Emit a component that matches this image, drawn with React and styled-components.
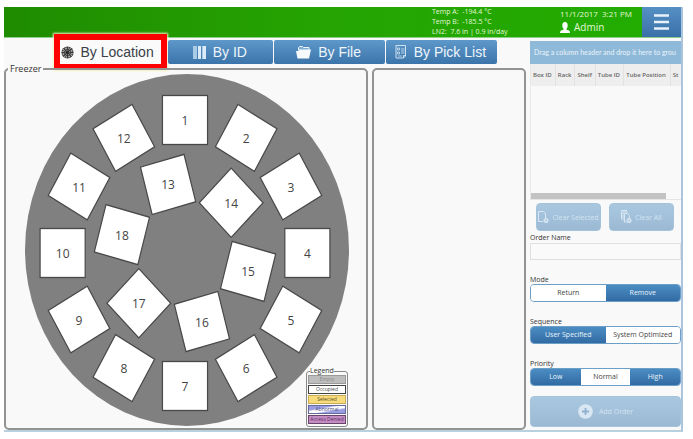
import React, { useState } from "react";
import styled, { createGlobalStyle } from "styled-components";

const GlobalStyle = createGlobalStyle`
* {
  box-sizing: border-box;
}

body {
  margin: 0;
  background: #fff;
  color: #333;
  font-family: "Open Sans", "Noto Sans", sans-serif;
  font-size: 8px;
}

button, input {
  font-family: inherit;
  margin: 0;
}
`;

const Page = styled.div`
  padding: 7px 10px 6px 4px;
`;

const Screen = styled.div`
  background: #f9f9f9;
  border-right: 2px solid #a9c4dc;
  border-bottom: 2px solid #b9d0de;
`;

const Header = styled.header`
  display: flex;
  justify-content: flex-end;
  height: 31px;
  background: linear-gradient(90deg, #1f8b00, #25a302 45%, #22ad00);
  border-bottom: 1px solid #8fcf8a;
  color: #e2f7d8;
`;

const Readings = styled.div`
  width: 128px;
  font-size: 7px;
  line-height: 10px;
  white-space: pre;
`;

const Session = styled.div`
  width: 82px;
  line-height: 13px;
  white-space: pre;
`;

const User = styled.div`
  display: flex;
  align-items: center;
  gap: 4px;
  font-size: 10px;
  line-height: 15px;
`;

const MenuButton = styled.button`
  display: flex;
  align-items: center;
  justify-content: center;
  width: 39px;
  padding: 0;
  border: 0;
  background: linear-gradient(#5590c4, #3a70a8);
`;

const Body = styled.main`
  display: grid;
  grid-template-columns: minmax(0, 1fr) 151px;
  gap: 4px;
  padding-top: 2px;
`;

const Tabs = styled.nav`
  display: grid;
  grid-template-columns: 112fr 105fr 110fr 111fr;
  gap: 1px;
  margin: 0 29px 0 51px;
`;

const Tab = styled.button`
  position: relative;
  display: flex;
  align-items: center;
  justify-content: center;
  gap: 7px;
  height: 24px;
  padding: 0 ${(props) => (props.$active ? "8px" : "2px")} 0 0;
  border: 0;
  border-radius: 2px;
  background: ${(props) => (props.$active ? "#fafafa" : "linear-gradient(#5e98ca, #3b74aa)")};
  color: ${(props) => (props.$active ? "#3a3f48" : "#eef5fb")};
  font-family: "Liberation Sans", Arial, sans-serif;
  font-size: 14px;
  white-space: nowrap;
`;

const Highlight = styled.span`
  position: absolute;
  inset: -6px 0 -6px -1px;
  border: 6px solid #f00;
  box-shadow: 0 0 2px 1px #f3f3c4;
  pointer-events: none;
`;

const Panels = styled.div`
  display: grid;
  grid-template-columns: minmax(0, 364fr) minmax(0, 154fr);
  gap: 4px;
`;

const Freezer = styled.fieldset`
  position: relative;
  min-width: 0;
  margin: 0;
  padding: 0;
  border: 2px solid #939393;
  border-radius: 5px;
`;

const FreezerTitle = styled.legend`
  margin-left: 2px;
  padding: 0 2px;
  font-size: 9px;
  line-height: 10px;
`;

const Diagram = styled.svg`
  display: block;
  width: 100%;
  margin-top: -4px;
  font-size: 12px;
`;

const Detail = styled.section`
  margin-top: 4px;
  border: 2px solid #939393;
  border-radius: 5px;
`;

const Legend = styled.fieldset`
  position: absolute;
  right: 18px;
  bottom: 1px;
  width: 42px;
  min-width: 0;
  margin: 0;
  padding: 0 1px 1px;
  border: 1px solid #888;
  border-radius: 3px;
  background: #f9f9f9;
`;

const LegendTitle = styled.legend`
  margin-left: 2px;
  padding: 0;
  background: #f9f9f9;
  font-size: 7px;
  line-height: 8px;
`;

const LegendItem = styled.div`
  height: 9px;
  margin-bottom: 1px;
  overflow: hidden;
  border: 1px solid ${(props) => props.$line};
  background: ${(props) => props.$fill};
  color: ${(props) => props.$ink};
  font-size: 5px;
  line-height: 7px;
  text-align: center;
  white-space: nowrap;
`;

const Sidebar = styled.aside`
  min-width: 0;
  padding-top: 1px;
`;

const GroupBar = styled.div`
  height: 23px;
  padding-left: 4px;
  overflow: hidden;
  background: #8fb9d9;
  color: #e9f3fa;
  font-family: Lato, "Open Sans", sans-serif;
  font-size: 7px;
  line-height: 23px;
  white-space: nowrap;
`;

const Grid = styled.div`
  height: 136px;
  overflow: hidden;
  border-left: 1px solid #e8e8e8;
  border-bottom: 1px solid #e5e5e5;
  display: flex;
  flex-direction: column;
  justify-content: space-between;
`;

const Table = styled.table`
  width: 100%;
  border-collapse: collapse;

  th {
    height: 22px;
    padding: 0 2px;
    background: #eee;
    border-right: 1px solid #e2e2e2;
    color: #666;
    font-size: 6px;
    font-weight: 600;
    text-align: left;
    white-space: nowrap;
  }

  th:last-child {
    border-right: 0;
  }
`;

const ScrollThumb = styled.div`
  flex: none;
  width: 90%;
  height: 6px;
  background: #c3c3c3;
`;

const Actions = styled.div`
  display: grid;
  grid-template-columns: 1fr 1fr;
  gap: 8px;
  padding: 3px 7px 0 6px;
`;

const FadedButton = styled.button`
  display: flex;
  align-items: center;
  justify-content: center;
  gap: ${(props) => (props.$wide ? "6px" : "3px")};
  width: 100%;
  height: ${(props) => (props.$wide ? "31px" : "28px")};
  padding: 0;
  border: 1px solid #a4c3dd;
  border-radius: 4px;
  background: linear-gradient(#a9c8e0, #9cb9d4);
  color: #d4e4f1;
  font-size: 7px;
  white-space: nowrap;
`;

const Label = styled.label`
  display: block;
  margin-top: 2px;
  font-size: 7px;
  line-height: 10px;
`;

const OrderInput = styled.input`
  display: block;
  width: 100%;
  height: 17px;
  padding: 0 4px;
  border: 1px solid #e0e0e0;
  background: #fafafa;
  font-size: 8px;
`;

const Choices = styled.div`
  display: flex;
  flex-direction: column;
  gap: 15px;
  padding: 15px 0 10px;
`;

const Field = styled.fieldset`
  min-width: 0;
  margin: 0;
  padding: 0;
  border: 0;
`;

const FieldTitle = styled.legend`
  padding: 0;
  font-size: 7px;
  line-height: 9px;
`;

const Segments = styled.div`
  display: flex;
  height: 18px;
  overflow: hidden;
  border: 1px solid #6c9fc8;
  border-radius: 4px;
`;

const Segment = styled.label`
  flex: 1;
  background: ${(props) => (props.$blue ? "linear-gradient(#4b8dc3, #326ba3)" : "#fff")};
  color: ${(props) => (props.$blue ? "#e9f3fb" : "#444")};
  font-size: 7px;
  line-height: 16px;
  text-align: center;
  white-space: nowrap;

  input {
    appearance: none;
    position: absolute;
    width: 0;
    height: 0;
  }
`;

const LocationIcon = () => (
  <svg width="13" height="13" viewBox="0 0 14 14">
    <circle cx="7" cy="7" r="6.5" fill="#444" />
    <circle cx="7" cy="7" r="4.7" fill="none" stroke="#ccc" strokeWidth="1.8" strokeDasharray="1.3 1.1" />
    <path d="M7 1v12M1 7h12M2.8 2.8l8.4 8.4M11.2 2.8l-8.4 8.4" stroke="#333" strokeWidth="1" />
    <circle cx="7" cy="7" r="2.4" fill="none" stroke="#bbb" strokeWidth=".8" strokeDasharray="1 1" />
    <circle cx="7" cy="7" r="1" fill="#222" />
  </svg>
);

const BarsIcon = () => (
  <svg width="13" height="13" viewBox="0 0 13 13">
    <path d="M0 0h4v13H0zM9 0h1v13H9z" fill="#a9cbe6" />
    <path d="M5 0h3v13H5zM10 0h3v13h-3z" fill="#dcebf7" />
  </svg>
);

const FolderIcon = () => (
  <svg width="15" height="13" viewBox="0 0 15 13">
    <path d="M2.500 4V1.500L3.500 .5h3l1 1h5.500V4" fill="#7fadd3" stroke="#edf5fb" />
    <path d="M2.500 3.500H15L13 12.500H1.500L0 5h2.500z" fill="#f6fafd" />
  </svg>
);

const ListIcon = () => (
  <svg width="12" height="14" viewBox="0 0 12 14" fill="none" stroke="#cfe3f3">
    <path d="M1 .5h9.500v10.500l-2 2H1z" />
    <path d="M2.500 3h2v2h-2zM2.500 7h2v2h-2zM6 4h3.500M6 6h3.500M6 8h3.500M3 11h4" strokeWidth=".8" />
    <path d="M8.500 13v-2.500h2" />
  </svg>
);

const UserIcon = () => (
  <svg width="10" height="11" viewBox="0 0 10 11" fill="#fff">
    <ellipse cx="5" cy="3.500" rx="2.700" ry="3.500" />
    <path d="M3.700 6h2.600v1.500L9 8.500q1 .5 1 2.500H0q0-2 1-2.500l2.700-1z" />
  </svg>
);

const MenuIcon = () => (
  <svg width="15" height="16" viewBox="0 0 15 16">
    <path d="M0 1.500h15M0 8h15M0 14.500h15" stroke="#e8f1f9" strokeWidth="2.400" />
  </svg>
);

const ClearIcon = ({ stacked }) => (
  <svg width="11" height="14" viewBox="0 0 11 14" fill="none" stroke="#d8e7f3">
    {stacked && <path d="M.5 9V.5h5.500M2 10.500V2h5" />}
    <path d={stacked ? "M5.500 12H3.500V3.500h3l2 2V8" : "M5 11.500H.5v-10h5l2 2V8"} />
    <circle cx="8" cy="10.500" r="2.500" fill="#d8e7f3" stroke="none" />
    <path d="M7 9.500l2 2M9 9.500l-2 2" stroke="#9cbbd6" strokeWidth=".7" />
  </svg>
);

const PlusIcon = () => (
  <svg width="15" height="15" viewBox="0 0 15 15">
    <circle cx="7.500" cy="7.500" r="7.300" fill="#d9e7f3" />
    <path d="M7.500 4v7M4 7.500h7" stroke="#8fb0cf" strokeWidth="1.800" />
  </svg>
);

const CENTER = { x: 179, y: 183 };
const SQUASH = 0.92;

const racks = [
  ...Array.from({ length: 12 }, (_, i) => ({ id: i + 1, angle: i * 30, radius: 133 })),
  ...Array.from({ length: 6 }, (_, i) => ({ id: i + 13, angle: i * 60 - 15, radius: 71 })),
];

const Rack = ({ id, angle, radius }) => {
  const rad = (angle * Math.PI) / 180;
  return (
    <g>
      <g transform={`translate(${CENTER.x} ${CENTER.y}) scale(${SQUASH} 1) rotate(${angle})`}>
        <rect x="-24.5" y={-radius - 24.5} width="49" height="49" fill="#fff" stroke="#484848" strokeWidth="1.3" />
      </g>
      <text
        x={CENTER.x + Math.sin(rad) * radius * SQUASH}
        y={CENTER.y - Math.cos(rad) * radius + 5}
        textAnchor="middle"
        fill="#444"
      >
        {id}
      </text>
    </g>
  );
};

const legend = [
  { name: "Empty", fill: "#bdbdbd", line: "#999", ink: "#888" },
  { name: "Occupied", fill: "#fff", line: "#444", ink: "#444" },
  { name: "Selected", fill: "#f8dc7c", line: "#c9ad55", ink: "#554a20" },
  { name: "Abnormal", fill: "linear-gradient(170deg, #9a9ee0 30%, #fff 42%, #fff 58%, #9a9ee0 70%)", line: "#666a9c", ink: "#44487c" },
  { name: "Access Denied", fill: "#c48cc4", line: "#6a456a", ink: "#5a2c5a" },
];

const tabs = [
  { name: "By Location", icon: <LocationIcon /> },
  { name: "By ID", icon: <BarsIcon /> },
  { name: "By File", icon: <FolderIcon /> },
  { name: "By Pick List", icon: <ListIcon /> },
];

const columns = ["Box ID", "Rack", "Shelf", "Tube ID", "Tube Position", "St"];

// with inverted set, the picked option is the white one
const Choice = ({ title, options, initial, inverted = false }) => {
  const [value, setValue] = useState(initial);
  return (
    <Field>
      <FieldTitle>{title}</FieldTitle>
      <Segments>
        {options.map((option) => (
          <Segment key={option} $blue={(option === value) !== inverted}>
            <input
              type="radio"
              name={title}
              checked={option === value}
              onChange={() => setValue(option)}
            />
            {option}
          </Segment>
        ))}
      </Segments>
    </Field>
  );
};

export default function App() {
  const [tab, setTab] = useState("By Location");

  return (
    <Page>
      <GlobalStyle />
      <Screen>
        <Header>
          <Readings>
            <div>{"Temp A:  -194.4 °C"}</div>
            <div>{"Temp B:  -185.5 °C"}</div>
            <div>{"LN2:  7.6 in | 0.9 in/day"}</div>
          </Readings>
          <Session>
            <div>{"11/1/2017  3:21 PM"}</div>
            <User><UserIcon />Admin</User>
          </Session>
          <MenuButton aria-label="Menu"><MenuIcon /></MenuButton>
        </Header>
        <Body>
          <div>
            <Tabs>
              {tabs.map(({ name, icon }) => (
                <Tab key={name} $active={name === tab} onClick={() => setTab(name)}>
                  {icon}
                  {name}
                  {name === tab && <Highlight />}
                </Tab>
              ))}
            </Tabs>
            <Panels>
              <Freezer>
                <FreezerTitle>Freezer</FreezerTitle>
                <Diagram viewBox="0 0 360 358">
                  <ellipse cx="181" cy="180" rx="162" ry="176" fill="#808080" />
                  {racks.map((rack) => <Rack key={rack.id} {...rack} />)}
                </Diagram>
                <Legend>
                  <LegendTitle>Legend</LegendTitle>
                  {legend.map(({ name, fill, line, ink }) => (
                    <LegendItem key={name} $fill={fill} $line={line} $ink={ink}>{name}</LegendItem>
                  ))}
                </Legend>
              </Freezer>
              <Detail />
            </Panels>
          </div>
          <Sidebar>
            <GroupBar>Drag a column header and drop it here to grou</GroupBar>
            <Grid>
              <Table>
                <thead>
                  <tr>{columns.map((column) => <th key={column}>{column}</th>)}</tr>
                </thead>
              </Table>
              <ScrollThumb />
            </Grid>
            <Actions>
              <FadedButton><ClearIcon />Clear Selected</FadedButton>
              <FadedButton><ClearIcon stacked />Clear All</FadedButton>
            </Actions>
            <Label htmlFor="order-name">Order Name</Label>
            <OrderInput id="order-name" />
            <Choices>
              <Choice title="Mode" options={["Return", "Remove"]} initial="Remove" />
              <Choice title="Sequence" options={["User Specified", "System Optimized"]} initial="User Specified" />
              <Choice title="Priority" options={["Low", "Normal", "High"]} initial="Normal" inverted />
            </Choices>
            <FadedButton $wide><PlusIcon />Add Order</FadedButton>
          </Sidebar>
        </Body>
      </Screen>
    </Page>
  );
}
